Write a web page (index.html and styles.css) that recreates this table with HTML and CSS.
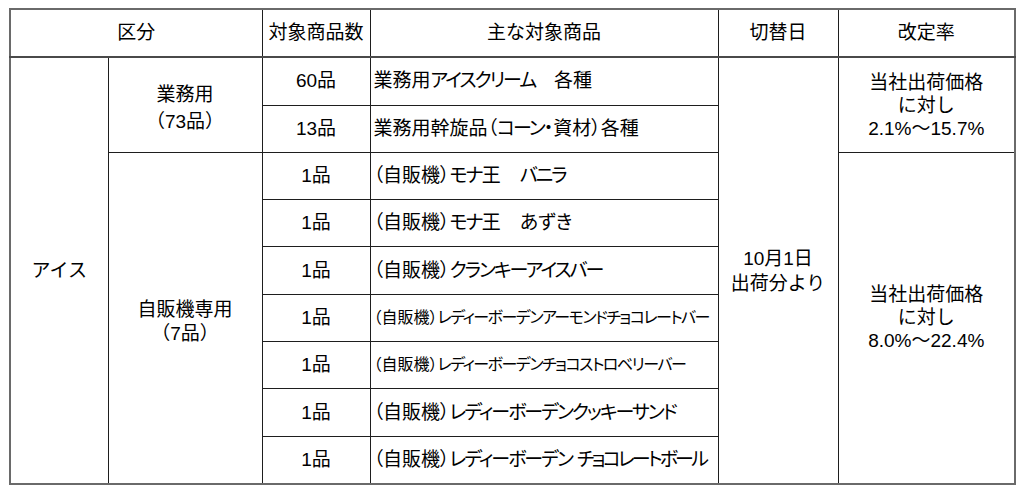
FILE: index.html
```html
<!DOCTYPE html>
<html lang="ja">
<head>
<meta charset="utf-8">
<title>価格改定</title>
<link rel="stylesheet" href="styles.css">
</head>
<body>
<div class="wrap">
<table class="tbl">
  <colgroup>
    <col class="c1"><col class="c2"><col class="c3"><col class="c4"><col class="c5"><col class="c6">
  </colgroup>
  <thead>
    <tr>
      <th colspan="2">区分</th>
      <th>対象商品数</th>
      <th>主な対象商品</th>
      <th>切替日</th>
      <th>改定率</th>
    </tr>
  </thead>
  <tbody>
    <tr>
      <td rowspan="9" class="ctr">アイス</td>
      <td rowspan="2" class="ctr biz">業務用<br>（73品）</td>
      <td class="ctr">60品</td>
      <td class="prod">業務用<span class="kn">アイスクリーム</span>　各種</td>
      <td rowspan="9" class="ctr date">10月1日<br>出荷分より</td>
      <td rowspan="2" class="ctr rate">当社出荷価格<br>に対し<br>2.1%～15.7%</td>
    </tr>
    <tr>
      <td class="ctr">13品</td>
      <td class="prod">業務用幹旋品（<span class="kn">コーン</span>・資材）各種</td>
    </tr>
    <tr>
      <td rowspan="7" class="ctr sub">自販機専用<br>（7品）</td>
      <td class="ctr">1品</td>
      <td class="prod">（自販機）<span class="kn">モナ</span>王　<span class="kn">バニラ</span></td>
      <td rowspan="7" class="ctr rate">当社出荷価格<br>に対し<br>8.0%～22.4%</td>
    </tr>
    <tr>
      <td class="ctr">1品</td>
      <td class="prod">（自販機）<span class="kn">モナ</span>王　あずき</td>
    </tr>
    <tr>
      <td class="ctr">1品</td>
      <td class="prod">（自販機）<span class="kn">クランキーアイスバー</span></td>
    </tr>
    <tr>
      <td class="ctr">1品</td>
      <td class="prod small">（自販機）<span class="kn">レディーボーデンアーモンドチョコレートバー</span></td>
    </tr>
    <tr>
      <td class="ctr">1品</td>
      <td class="prod small">（自販機）<span class="kn">レディーボーデンチョコストロベリーバー</span></td>
    </tr>
    <tr>
      <td class="ctr">1品</td>
      <td class="prod">（自販機）<span class="kn">レディーボーデンクッキーサンド</span></td>
    </tr>
    <tr>
      <td class="ctr">1品</td>
      <td class="prod">（自販機）<span class="kn">レディーボーデン</span><span class="gap"></span><span class="kn tight">チョコレートボール</span></td>
    </tr>
  </tbody>
</table>
</div>
</body>
</html>
```

FILE: styles.css
```css
html, body {
  margin: 0;
  padding: 0;
  background: #ffffff;
}
body {
  font-family: "Liberation Sans", "Noto Sans CJK JP", sans-serif;
  color: #000;
}
.wrap {
  padding: 8px 0 0 9px;
}
.tbl {
  border-collapse: collapse;
  table-layout: fixed;
  width: 1005px;
  border: 2px solid #6a6a6a;
  font-size: 19px;
}
.c1 { width: 98px; }
.c2 { width: 154px; }
.c3 { width: 108px; }
.c4 { width: 348px; }
.c5 { width: 120px; }
.c6 { width: 177px; }
.tbl th,
.tbl td {
  border: 1px solid #1e1e1e;
  padding: 0;
  height: 46.3px;
  line-height: 24px;
  vertical-align: middle;
}
.tbl th {
  font-weight: normal;
  text-align: center;
  border-bottom: 2px solid #4a4a4a;
}
.ctr {
  text-align: center;
}
.prod {
  text-align: left;
  padding-left: 3px !important;
  white-space: nowrap;
  font-feature-settings: "palt";
}
.kn {
  letter-spacing: -2px;
}
.kn.tight {
  letter-spacing: -2.8px;
}
.gap {
  display: inline-block;
  width: 5px;
}
.prod.small {
  font-size: 16px;
}
.prod.small .kn {
  letter-spacing: -1.5px;
}
.biz {
  line-height: 27px !important;
  padding-top: 5px !important;
}
.rate {
  line-height: 23px !important;
}
.date {
  line-height: 25px !important;
}
.sub {
  padding-top: 8px !important;
}
```
